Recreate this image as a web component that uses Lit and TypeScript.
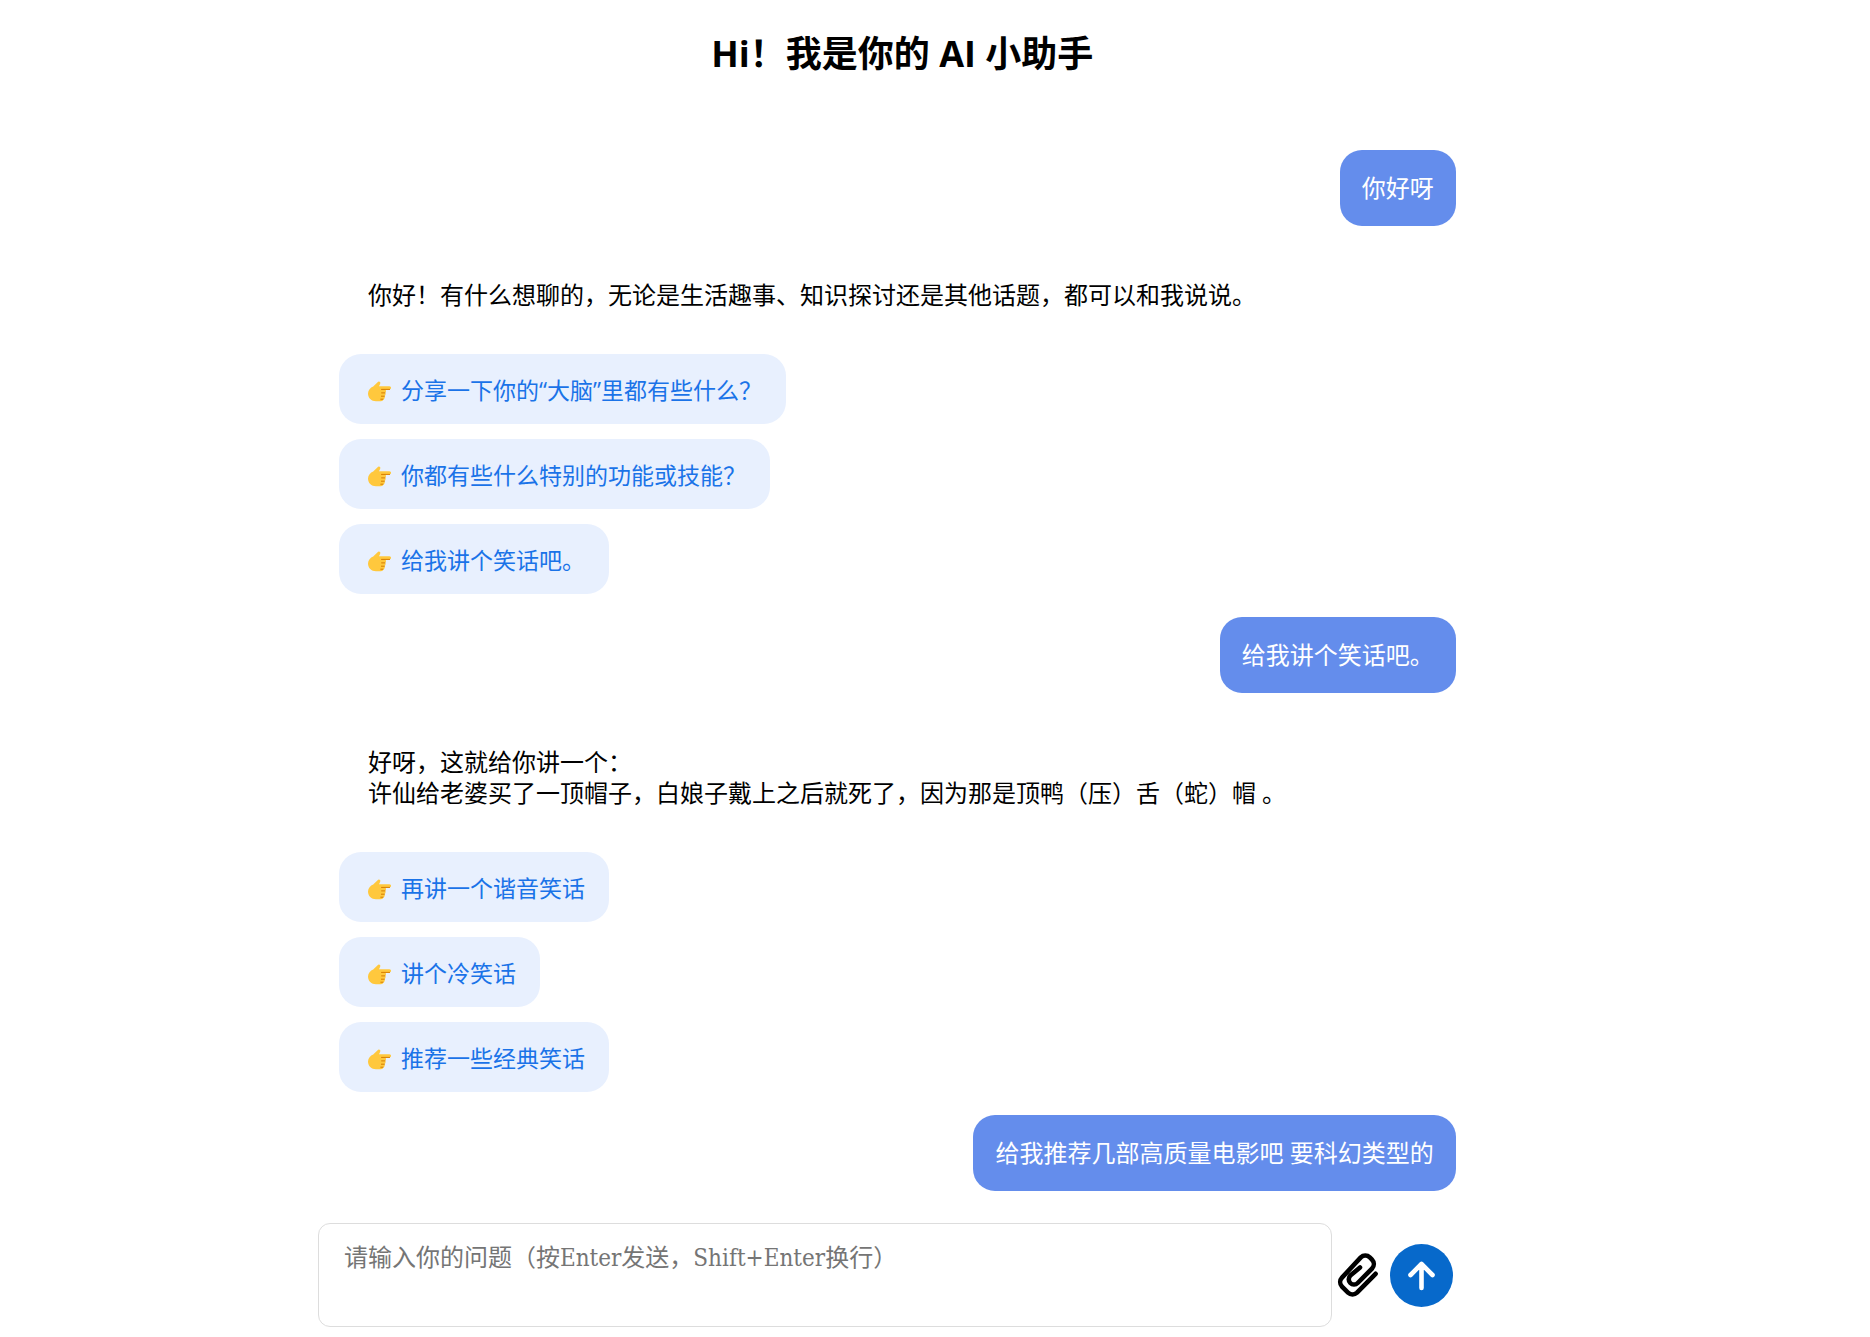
import { LitElement, html, css, svg } from "lit";
import { customElement, property, state } from "lit/decorators.js";

interface Message {
  role: "user" | "bot";
  lines: string[];
  suggestions?: string[];
}

const conversation: Message[] = [
  { role: "user", lines: ["你好呀"] },
  {
    role: "bot",
    lines: ["你好！有什么想聊的，无论是生活趣事、知识探讨还是其他话题，都可以和我说说。"],
    suggestions: ["分享一下你的“大脑”里都有些什么？", "你都有些什么特别的功能或技能？", "给我讲个笑话吧。"],
  },
  { role: "user", lines: ["给我讲个笑话吧。"] },
  {
    role: "bot",
    lines: ["好呀，这就给你讲一个：", "许仙给老婆买了一顶帽子，白娘子戴上之后就死了，因为那是顶鸭（压）舌（蛇）帽 。"],
    suggestions: ["再讲一个谐音笑话", "讲个冷笑话", "推荐一些经典笑话"],
  },
  { role: "user", lines: ["给我推荐几部高质量电影吧 要科幻类型的"] },
];

const handIcon = svg`
  <path fill="#ffc83d" d="M1 13.5C1 10 3.4 7.6 6.2 6.4L10.6 2.2C11.5.9 14 1.6 13.2 3.7L12 6.2H22.4C24.6 6.2 24.6 9.4 22.4 9.4H18.2C19.4 10 19.3 12.2 18 12.7 19 13.5 18.7 15.6 17.4 16 18.2 17 17.8 19 16.4 19.4 15.8 21 14.6 21.2 12 21.2H9C4.4 21.2 1 18 1 13.5Z"/>
  <path fill="none" stroke="#d67d00" stroke-width="1" stroke-linecap="round" d="M14.5 9.4H22.6M14.6 12.9H18M14.4 16.2H17.4M13.8 19.2H16"/>`;

@customElement("suggestion-chip")
export class SuggestionChip extends LitElement {
  @property() text = "";

  static styles = css`
    .chip {
      display: flex;
      align-items: center;
      gap: 9px;
      padding: 21px 24px 19px 28px;
      border: 0;
      border-radius: 22px;
      background: #e8f0fe;
      color: #1a73e8;
      font: inherit;
      font-size: 23px;
      line-height: 30px;
      cursor: pointer;
    }
    .hand {
      width: 25px;
      height: 24px;
      flex: none;
    }
  `;

  render() {
    return html`<button class="chip" type="button">
      <svg class="hand" viewBox="0 -2 25 24" aria-hidden="true">${handIcon}</svg>
      <span>${this.text}</span>
    </button>`;
  }
}

@customElement("chat-message")
export class ChatMessage extends LitElement {
  @property({ attribute: false }) message!: Message;

  static styles = css`
    :host {
      display: block;
    }
    .user {
      display: flex;
      justify-content: flex-end;
    }
    .bubble {
      padding: 22px;
      border-radius: 22px;
      background: #648dec;
      color: #fff;
      font-size: 24px;
      line-height: 32px;
    }
    .reply {
      padding: 30px 29px 44px;
      font-size: 24px;
      line-height: 31px;
    }
    .line {
      margin: 0;
    }
    .suggestions {
      display: flex;
      flex-direction: column;
      align-items: flex-start;
      gap: 15px;
    }
  `;

  render() {
    const { role, lines, suggestions = [] } = this.message;
    if (role === "user") {
      return html`<div class="user"><div class="bubble">${lines}</div></div>`;
    }
    return html`
      <div class="reply">${lines.map((l) => html`<p class="line">${l}</p>`)}</div>
      <div class="suggestions">
        ${suggestions.map((s) => html`<suggestion-chip .text=${s}></suggestion-chip>`)}
      </div>
    `;
  }
}

@customElement("app-root")
export class AppRoot extends LitElement {
  @state() private draft = "";

  static styles = css`
    :host {
      display: block;
      font-family: "Open Sans", "Noto Sans CJK SC", sans-serif;
      color: #000;
      background: #fff;
    }
    .page {
      display: flex;
      flex-direction: column;
      box-sizing: border-box;
      min-height: 100vh;
      padding: 30px 20.5% 10px 17%;
    }
    .title {
      margin: 0;
      text-align: center;
      font-size: 36px;
      font-weight: 700;
      line-height: 48px;
    }
    .messages {
      display: flex;
      flex-direction: column;
      flex: 1;
      gap: 23px;
      padding: 72px 31px 32px 21px;
    }
    .composer {
      display: flex;
      align-items: center;
      padding-right: 34px;
    }
    .input {
      flex: 1;
      min-width: 0;
      box-sizing: border-box;
      height: 104px;
      padding: 20px 25px;
      border: 1px solid #ddd;
      border-radius: 12px;
      outline: none;
      resize: none;
      background: #fff;
      color: #000;
      font-family: "DejaVu Serif Condensed", "Noto Sans CJK SC", serif;
      font-size: 24px;
      line-height: 28px;
    }
    .input::placeholder {
      color: #757575;
      opacity: 1;
    }
    .attach,
    .send {
      display: flex;
      flex: none;
      padding: 0;
      border: 0;
      background: none;
      cursor: pointer;
    }
    .attach {
      margin: 0 8px 0 4px;
    }
    .clip {
      width: 46px;
      height: 46px;
    }
    .send {
      border-radius: 50%;
      background: #0769cb;
    }
    .arrow {
      width: 63px;
      height: 63px;
    }
  `;

  render() {
    return html`
      <main class="page">
        <h1 class="title">Hi！我是你的 AI 小助手</h1>
        <section class="messages">
          ${conversation.map((m) => html`<chat-message .message=${m}></chat-message>`)}
        </section>
        <form class="composer" @submit=${(e: Event) => e.preventDefault()}>
          <textarea
            class="input"
            aria-label="请输入你的问题"
            placeholder="请输入你的问题（按Enter发送，Shift+Enter换行）"
            .value=${this.draft}
            @input=${(e: Event) => (this.draft = (e.target as HTMLTextAreaElement).value)}
          ></textarea>
          <button class="attach" type="button" aria-label="添加附件">
            <svg class="clip" viewBox="0 0 46 46" fill="none" stroke="#000" stroke-width="4.6" stroke-linecap="round" stroke-linejoin="round" aria-hidden="true">
              <path d="M39.600 21.800 21 40.600a6.500 6.500 0 0 1-9 0L6 34.600a6.500 6.500 0 0 1 0-9L24.800 5.400a6.500 6.500 0 0 1 9 0L36 7.600a6.500 6.500 0 0 1 0 9L21.700 31a5.200 5.200 0 0 1-7.400 0a5.200 5.200 0 0 1 0-7.400L24 15.500"/>
            </svg>
          </button>
          <button class="send" type="submit" aria-label="发送">
            <svg class="arrow" viewBox="0 0 63 63" fill="none" stroke="#fff" stroke-width="4.6" stroke-linecap="round" stroke-linejoin="round" aria-hidden="true">
              <path d="M31.500 44V20M20.500 31 31.500 20 42.500 31"/>
            </svg>
          </button>
        </form>
      </main>
    `;
  }
}
